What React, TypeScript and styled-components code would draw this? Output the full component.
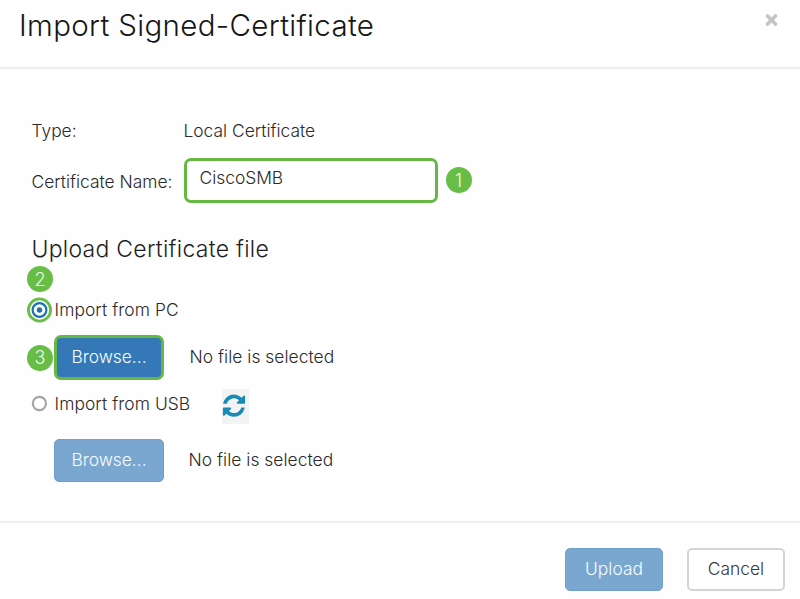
import React from "react";
import styled, { createGlobalStyle } from "styled-components";

const GlobalStyle = createGlobalStyle`
  * { box-sizing: border-box; }
  body {
    margin: 0;
    background: #fefefe;
    color: #2a2a2a;
    font-family: Inter, "Liberation Sans", sans-serif;
    font-size: 17.4px;
    font-weight: 360;
  }
`;

const Dialog = styled.main`
  width: 800px;
  height: 599px;
  display: flex;
  flex-direction: column;
  overflow: hidden;
`;

const Header = styled.header`
  height: 69px;
  flex: none;
  display: flex;
  justify-content: space-between;
  padding: 0 22px 0 19px;
  border-bottom: 2px solid #eeeeee;
`;

const Title = styled.h1`
  margin: 5px 0 0;
  font-size: 29.5px;
  line-height: 40px;
  font-weight: 350;
  letter-spacing: 0.34px;
  color: #161616;
`;

const CloseButton = styled.button`
  width: 14px;
  height: 14px;
  margin-top: 13px;
  padding: 0;
  border: 0;
  background: none;
  display: block;
  svg { display: block; }
`;

const Body = styled.section`
  height: 454px;
  flex: none;
  padding: 41px 0 0 27px;
  border-bottom: 2px solid #eeeeee;
`;

const FieldRow = styled.div<{ $height: number }>`
  display: grid;
  grid-template-columns: 156.5px 254px auto;
  justify-content: start;
  align-items: center;
  height: ${(p) => p.$height}px;
`;

const Text = styled.span`
  line-height: 24px;
  white-space: nowrap;
`;

const FieldLabel = styled(Text)<{ $drop?: number }>`
  padding: ${(p) => p.$drop ?? 0}px 0 0 4.5px;
`;

const NameInput = styled.div`
  height: 45px;
  display: flex;
  align-items: center;
  padding: 0 0 4px 13px;
  border: 3px solid #66b845;
  border-radius: 7px;
  background: #fff;
`;

const Step = styled.span`
  width: 26px;
  height: 26px;
  flex: none;
  display: flex;
  align-items: center;
  justify-content: center;
  border-radius: 50%;
  background: #67bd45;
  color: #eefbe8;
  font-size: 18px;
  font-weight: 300;
`;

const FieldStep = styled(Step)`
  margin-left: 8px;
`;

const SectionTitle = styled.h2`
  margin: 23px 0 0 4.5px;
  font-size: 23px;
  line-height: 34px;
  font-weight: 360;
  letter-spacing: 0.27px;
  color: #1e1e1e;
`;

const StepRow = styled.div`
  height: 26px;
`;

const OptionRow = styled.div<{ $height: number }>`
  height: ${(p) => p.$height}px;
  display: flex;
  align-items: center;
  letter-spacing: 0.08px;
`;

const RadioSlot = styled.span`
  width: 27.5px;
  flex: none;
  display: flex;
  svg { display: block; }
`;

const Refresh = styled.span`
  width: 27px;
  height: 35px;
  margin: 4px 0 0 auto;
  background: #f3f3f3;
  svg { display: block; }
`;

const UsbRow = styled(OptionRow)`
  width: 222px;
`;

const FileRow = styled.div<{ $gap: number }>`
  display: grid;
  grid-template-columns: 27px 110px auto;
  justify-content: start;
  align-items: center;
  height: 45px;
  margin-top: ${(p) => p.$gap}px;
`;

const Button = styled.button<{ $kind: "primary" | "disabled" | "plain"; $outlined?: boolean }>`
  height: ${(p) => (p.$outlined ? 45 : 43)}px;
  padding: 0 0 2px;
  font: inherit;
  line-height: 24px;
  border-radius: ${(p) => (p.$outlined ? 7 : 5)}px;
  border: ${(p) =>
    p.$outlined ? "3px solid #66b845" : p.$kind === "plain" ? "2px solid #d4d4d4" : "1px solid #709fca"};
  background: ${(p) => ({ primary: "#3578b7", disabled: "#79a7d0", plain: "#fff" })[p.$kind]};
  color: ${(p) => ({ primary: "#f8fcff", disabled: "#f8fcff", plain: "#363636" })[p.$kind]};
`;

const FileStatus = styled(Text)<{ $indent: number }>`
  padding: 0 0 1px ${(p) => p.$indent}px;
  letter-spacing: 0.04px;
`;

const Footer = styled.footer`
  display: grid;
  grid-template-columns: 98px 98px;
  column-gap: 24px;
  justify-content: end;
  padding: 25px 15px 0 0;
`;

const RadioOn = () => (
  <svg width="26" height="26" viewBox="0 0 26 26">
    <circle cx="12.5" cy="13" r="11.1" fill="#fff" stroke="#67bd45" strokeWidth="2.8" />
    <circle cx="12.5" cy="13" r="6.9" fill="#fff" stroke="#1b74ae" strokeWidth="2.2" />
    <circle cx="12.5" cy="13" r="2.7" fill="#1b74ae" />
  </svg>
);

const RadioOff = () => (
  <svg width="26" height="26" viewBox="0 0 26 26">
    <circle cx="12.4" cy="12.5" r="6.6" fill="#fff" stroke="#a3a3a3" strokeWidth="2.1" />
  </svg>
);

const RefreshIcon = () => (
  <svg width="27" height="35" viewBox="0 0 27 35">
    <g transform="translate(0.9 5.6) scale(0.01445 0.01445)" fill="#178bb4">
      <path d="M1511 928q0 5-1 7-64 268-268 434.500t-478 166.500q-146 0-282.500-55t-243.500-157l-129 129q-19 19-45 19t-45-19-19-45v-448q0-26 19-45t45-19h448q26 0 45 19t19 45-19 45l-137 137q71 66 161 102t187 36q134 0 250-65t186-179q11-17 53-117 8-23 30-23h192q13 0 22.500 9.500t9.500 22.500zM1536 128v448q0 26-19 45t-45 19h-448q-26 0-45-19t-19-45 19-45l138-138q-148-137-349-137-134 0-250 65t-186 179q-11 17-53 117-8 23-30 23h-199q-13 0-22.500-9.500t-9.500-22.500v-7q65-268 270-434.500t480-166.500q146 0 284 55.500t245 156.500l130-129q19-19 45-19t45 19 19 45z" />
    </g>
  </svg>
);

export default function App() {
  return (
    <>
      <GlobalStyle />
      <Dialog>
        <Header>
          <Title>Import Signed-Certificate</Title>
          <CloseButton aria-label="Close">
            <svg width="14" height="14" viewBox="0 0 14 14">
              <path d="M3.5 3L11.5 11M11.5 3L3.5 11" stroke="#c4c4c4" strokeWidth="3.6" strokeLinecap="round" />
            </svg>
          </CloseButton>
        </Header>
        <Body>
          <FieldRow $height={41}>
            <FieldLabel>Type:</FieldLabel>
            <Text>Local Certificate</Text>
          </FieldRow>
          <FieldRow $height={58}>
            <FieldLabel $drop={3}>Certificate Name:</FieldLabel>
            <NameInput>
              <Text>CiscoSMB</Text>
            </NameInput>
            <FieldStep>1</FieldStep>
          </FieldRow>
          <SectionTitle>Upload Certificate file</SectionTitle>
          <StepRow>
            <Step>2</Step>
          </StepRow>
          <OptionRow $height={36}>
            <RadioSlot><RadioOn /></RadioSlot>
            <Text>Import from PC</Text>
          </OptionRow>
          <FileRow $gap={7}>
            <Step>3</Step>
            <Button $kind="primary" $outlined><Text>Browse...</Text></Button>
            <FileStatus $indent={25.5}>No file is selected</FileStatus>
          </FileRow>
          <UsbRow $height={48}>
            <RadioSlot><RadioOff /></RadioSlot>
            <Text>Import from USB</Text>
            <Refresh><RefreshIcon /></Refresh>
          </UsbRow>
          <FileRow $gap={10}>
            <span />
            <Button $kind="disabled"><Text>Browse...</Text></Button>
            <FileStatus $indent={24.5}>No file is selected</FileStatus>
          </FileRow>
        </Body>
        <Footer>
          <Button $kind="disabled"><Text>Upload</Text></Button>
          <Button $kind="plain"><Text>Cancel</Text></Button>
        </Footer>
      </Dialog>
    </>
  );
}
